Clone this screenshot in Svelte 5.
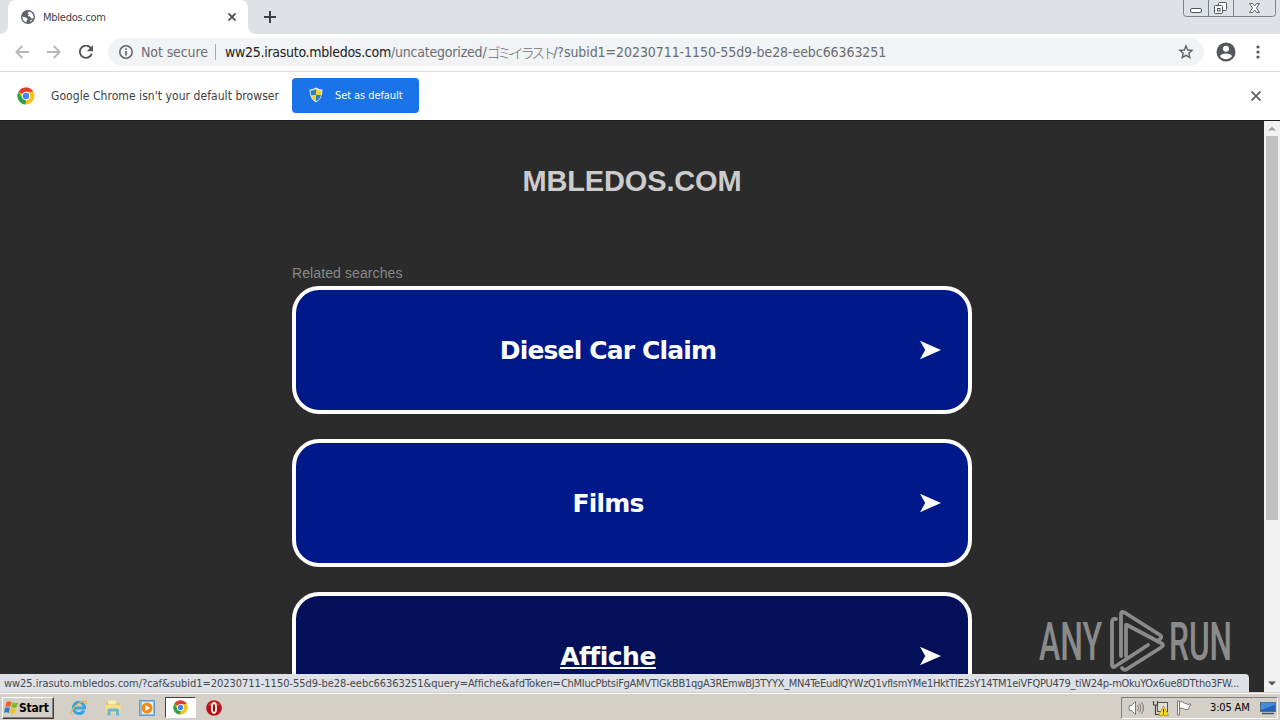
<script lang="ts">
	let tabTitle = 'Mbledos.com';
	let host = 'ww25.irasuto.mbledos.com';
	let pathStart = '/uncategorized/';
	let pathKana = 'ゴミ-イラスト';
	let pathEnd = '/?subid1=20230711-1150-55d9-be28-eebc66363251';
	let hoverUrl =
		'ww25.irasuto.mbledos.com/?caf&subid1=20230711-1150-55d9-be28-eebc66363251&query=Affiche&afdToken=';
	let hoverToken =
		'ChMIucPbtsiFgAMVTlGkBB1qgA3REmwBJ3TYYX_MN4TeEudlQYWzQ1vflsmYMe1HktTIE2sY14TM1eiVFQPU479_tiW24p-mOkuYOx6ue8DTtho3FW...';

	let searches = [
		{ label: 'Diesel Car Claim', hovered: false },
		{ label: 'Films', hovered: false },
		{ label: 'Affiche', hovered: true }
	];
</script>

{#snippet chromeLogo(size: number)}
	<svg width={size} height={size} viewBox="0 0 18 18">
		<circle cx="9" cy="9" r="8.5" fill="#fbc116" />
		<path d="M9 9 1.6 4.7A8.5 8.5 0 0 1 16.4 4.7H9Z" fill="#e33b2e" />
		<path d="M1.6 4.7 5.3 11.1 9 13 8.6 17.5A8.5 8.5 0 0 1 1.6 4.7Z" fill="#2ba24c" />
		<circle cx="9" cy="9" r="4.2" fill="#fff" />
		<circle cx="9" cy="9" r="3.2" fill="#4285f4" />
	</svg>
{/snippet}

<div class="screen">
	<header class="tabstrip">
		<div class="strip-start"></div>
		<div class="tab">
			<svg class="globe" width="14" height="14" viewBox="0 0 14 14">
				<circle cx="7" cy="7" r="7" fill="#5f6368" />
				<path d="M1.5 6.5 5 7.5 7 9.5 5.5 10.5V12.4A5.7 5.7 0 0 1 1.5 6.5ZM8 1.5 6.5 3.2 8 4.5 6.5 6 9 6.5 10.5 8.5 12.5 8.2A5.6 5.6 0 0 0 8 1.5ZM9.5 10 12 9.5 9 12.2Z" fill="#fff" />
			</svg>
			<span class="tab-title">{tabTitle}</span>
			<svg class="tab-close" width="8" height="8" viewBox="0 0 8 8"><path d="M.5.5l7 7M7.5.5l-7 7" stroke="#45494d" stroke-width="1.7" /></svg>
		</div>
		<div class="strip-end">
			<svg class="plus" width="12" height="12" viewBox="0 0 12 12"><path d="M6 0v12M0 6h12" stroke="#3c4043" stroke-width="2" /></svg>
		</div>
		<svg class="window-buttons" width="94" height="17" viewBox="0 0 94 17" fill="none">
			<path d="M.5 0v13.5q0 3 3 3h86q3 0 3-3V0M25.5 0v16M50.5 0v16" stroke="#7c828c" />
			<rect x="7.5" y="8.5" width="11" height="4" rx="1.5" fill="#fff" stroke="#50555f" />
			<rect x="35.5" y="2.5" width="8" height="8" rx="1" fill="#fff" stroke="#50555f" />
			<rect x="31.5" y="5.5" width="8" height="8" rx="1" fill="#fff" stroke="#50555f" />
			<rect x="34.5" y="8.5" width="2.5" height="2.5" stroke="#50555f" />
			<path d="M66.5 3.5h3l2 2.5 2-2.5h3L73.5 8l3 4.500h-3l-2-2.500-2 2.500h-3L69.500 8Z" fill="#fff" stroke="#626771" />
		</svg>
	</header>

	<nav class="toolbar">
		<svg class="arrow" width="14" height="14" viewBox="0 0 14 14"><path d="M14 7H1.5M7.3 1l-6 6 6 6" /></svg>
		<svg class="arrow forward" width="14" height="14" viewBox="0 0 14 14"><path d="M0 7h12.5M6.7 1l6 6-6 6" /></svg>
		<svg class="reload" width="14" height="14" viewBox="0 0 14 14">
			<path d="M12 3.3A6.1 6.1 0 1 0 12.8 8.5" fill="none" stroke="#54585c" stroke-width="1.9" />
			<path d="M14 0v6.2H7.8Z" fill="#54585c" />
		</svg>
		<div class="omnibox">
			<svg class="info" width="14" height="14" viewBox="0 0 14 14">
				<circle cx="7" cy="7" r="6.2" fill="none" stroke="#5f6368" stroke-width="1.5" />
				<path d="M7 6v4.5M7 3.3v1.600" stroke="#5f6368" stroke-width="1.6" />
			</svg>
			<span class="secure">Not secure</span>
			<span class="divider"></span>
			<span class="url"><span class="host">{host}</span><span class="path">{pathStart}</span><span class="kana">{pathKana}</span><span class="query">{pathEnd}</span></span>
			<svg class="star" width="16" height="16" viewBox="0 0 16 16">
				<path d="M8 1.9 9.7 6l4.400.4-3.300 2.900 1 4.300L8 11.300l-3.800 2.300 1-4.300L1.900 6.400 6.300 6Z" fill="none" stroke="#5f6368" stroke-width="1.4" />
			</svg>
		</div>
		<svg class="avatar" width="20" height="20" viewBox="0 0 20 20">
			<circle cx="10" cy="10" r="9.5" fill="#54585c" />
			<circle cx="10" cy="6.8" r="3" fill="#fff" />
			<path d="M4 14.200c1.200-3.600 10.800-3.600 12 0-2.800 4-9.200 4-12 0Z" fill="#fff" />
		</svg>
		<svg class="dots" width="4" height="14" viewBox="0 0 4 14" fill="#54585c">
			<circle cx="2" cy="2" r="1.6" /><circle cx="2" cy="7" r="1.6" /><circle cx="2" cy="12" r="1.6" />
		</svg>
	</nav>

	<div class="infobar">
		<span class="logo">{@render chromeLogo(18)}</span>
		<span class="message">Google Chrome isn't your default browser</span>
		<button class="set-default">
			<svg width="14" height="16" viewBox="0 0 14 16">
				<path d="M7 .5Q10 2.5 13.5 2.5 13.5 12 7 15.5.5 12 .5 2.5 4 2.5 7 .5Z" fill="#e8edf2" />
				<path d="M7 2v6h5q.5-2 .5-4.3Q9.5 3.5 7 2Z" fill="#f6cf32" />
				<path d="M7 2v6H2Q1.5 6 1.5 3.7 4.5 3.5 7 2Z" fill="#287fc2" />
				<path d="M7 8h5q-1 4.5-5 6.5Z" fill="#287fc2" />
				<path d="M7 8v6.5Q3 12.5 2 8Z" fill="#f6cf32" />
			</svg>
			<span>Set as default</span>
		</button>
		<svg class="dismiss" width="10" height="10" viewBox="0 0 10 10"><path d="M.5.5l9 9M9.5.5l-9 9" stroke="#5f6368" stroke-width="1.9" /></svg>
	</div>

	<div class="viewport">
		<main class="page">
			<h1>MBLEDOS.COM</h1>
			<section class="results">
				<p class="related">Related searches</p>
				{#each searches as search}
					<a class="card" class:hovered={search.hovered} href="#top">
						<span class="label">{search.label}</span>
						<svg class="chevron" width="22" height="20" viewBox="0 0 22 20"><path d="M0 .8 21 10 0 19.200 5.200 10Z" fill="#fff" /></svg>
					</a>
				{/each}
			</section>
		</main>
		<div class="scrollbar">
			<svg width="8" height="5" viewBox="0 0 8 5"><path d="M0 4.500 4 .5l4 4Z" fill="#a0a0a0" /></svg>
			<div class="thumb"></div>
			<svg class="down" width="8" height="5" viewBox="0 0 8 5"><path d="M0 .5h8l-4 4Z" fill="#505050" /></svg>
		</div>

		<svg class="watermark" width="200" height="64" viewBox="0 0 200 64">
			<text x="2" y="51" textLength="63" lengthAdjust="spacingAndGlyphs">ANY</text>
			<text x="132" y="51" textLength="63" lengthAdjust="spacingAndGlyphs">RUN</text>
			<g fill="none" stroke="#8b8b8b" stroke-width="3.8" stroke-linejoin="round" stroke-linecap="round">
				<path d="M79 10q-4-1-4 3v43q0 3 3 1.500L111 36" />
				<path d="M84 47V5q0-3.500 3.500-1.500L123 26q3 2-1 5l-2 .5" />
				<path d="M90 16l34 18q4 2 0 4.500L90 60q-3 2-5-1" />
				<path d="M89 16v31" />
			</g>
		</svg>
		<div class="status"><span class="status-start">{hoverUrl}</span><span class="status-token">{hoverToken}</span></div>
	</div>

	<footer class="taskbar">
		<button class="start">
			<svg width="15" height="15" viewBox="0 0 15 15">
				<path d="M2.5 2q2.500-1.500 5 0L6.300 7q-2.500-1.500-5 0Z" fill="#e8602c" />
				<path d="M8.3 2.400q2.500 1.500 5.700 0L12.700 7.200q-2.800 1.500-5.500 0Z" fill="#7db928" />
				<path d="M1 8q2.500-1.500 5 0l-1.200 5q-2.500-1.500-4.800 0Z" fill="#3578c4" />
				<path d="M7 8.200q2.500 1.500 5.400 0L11.100 13q-2.800 1.500-5.400 0Z" fill="#f6be25" />
			</svg>
			<span>Start</span>
		</button>
		<div class="quick">
			<svg width="18" height="18" viewBox="0 0 18 18">
				<path d="M14 11.500A5.600 5.600 0 1 1 14.600 9H5" fill="none" stroke="#36a5df" stroke-width="3" />
				<path d="M1.500 15.500C-1 12 9 2 15.500 2q1.500.5.5 3" fill="none" stroke="#e5bc45" stroke-width="1.3" />
			</svg>
			<svg width="18" height="18" viewBox="0 0 18 18">
				<path d="M2 3h5l1 1h8v10H2Z" fill="#e3c15e" />
				<path d="M4 1.500h8v4H4Z" fill="#f8eeb4" /><path d="M1.500 6h15v8h-15Z" fill="#f6df87" />
				<path d="M3.500 16.500V11.500q0-2 2-2h7.500q2 0 2 2v5h-3v-4H6.500v4Z" fill="#66b3de" />
			</svg>
			<svg width="18" height="18" viewBox="0 0 18 18">
				<rect x="1.5" y="1.5" width="15" height="15" fill="#8cbce2" stroke="#6a9bc4" />
				<rect x="4" y="3" width="11" height="12" fill="#e8f1f8" />
				<circle cx="9" cy="9" r="5.5" fill="#f38b17" /><path d="M7.500 6v6l4.500-3Z" fill="#fff" />
			</svg>
		</div>
		<div class="running">{@render chromeLogo(15)}</div>
		<svg class="opera" width="16" height="16" viewBox="0 0 16 16">
			<circle cx="8" cy="8" r="7.8" fill="#b51218" />
			<path d="M2 6Q8-3 14 6 10 3 2 6Z" fill="#dd5254" />
			<ellipse cx="8" cy="8" rx="2.1" ry="4.9" fill="#961015" stroke="#fff" stroke-width="1.8" />
		</svg>
		<div class="tray">
			<svg width="17" height="16" viewBox="0 0 17 16" fill="none" stroke="#777">
				<path d="M1.500 5.500h2l4-4v13l-4-4h-2q-1-2.500 0-5Z" fill="#fff" />
				<path d="M9.500 5q2 3 0 6M11.500 3.500q3 4.500 0 9M13.500 2q4 6 0 12" />
			</svg>
			<svg width="17" height="16" viewBox="0 0 17 16" fill="none">
				<rect x="5.5" y="2.5" width="10" height="9" fill="#ddd" stroke="#555" />
				<path d="M1.500 1v4h4V1M3.500 5v9.500h8" stroke="#444" stroke-width="1.2" />
				<path d="m11.500 6 5 9.500h-10Z" fill="#ffd91c" stroke="#9c8100" stroke-width=".6" />
				<path d="M11.500 9v3.500M11.500 13.300v1.200" stroke="#222" />
			</svg>
			<svg width="17" height="16" viewBox="0 0 17 16">
				<path d="M1.500 1v14h2v-14ZM3.500 2q3-1 5 1t6.500 1L12 9.500q-3 .5-4.500-.7T3.500 8.500Z" fill="#fff" stroke="#777" />
			</svg>
			<span class="clock">3:05 AM</span>
			<svg class="desktop" width="16" height="14" viewBox="0 0 16 14">
				<rect x=".5" y="1.5" width="15" height="9" fill="#2362b8" stroke="#4e6f9c" />
				<path d="M1 2h14v2L1 9Z" fill="#458bd8" /><path d="M2 12.500h12" stroke="#45546b" stroke-width="1.5" />
			</svg>
		</div>
	</footer>
</div>

<style>
	:global(body) {
		background: #2b2b2b;
		overflow: hidden;
	}

	.screen {
		width: 1280px;
		height: 720px;
		display: flex;
		flex-direction: column;
		overflow: hidden;
		font-family: 'DejaVu Sans Condensed', 'DejaVu Sans', sans-serif;
		font-stretch: condensed;
	}

	svg {
		display: block;
		flex-shrink: 0;
	}

	button {
		border: 0;
		font-family: inherit;
		font-stretch: inherit;
	}

	.screen span,
	.status {
		white-space: nowrap;
	}

	.tabstrip {
		height: 34px;
		display: flex;
		flex-shrink: 0;
		background: #fff;
	}

	.strip-start {
		width: 8px;
		background: #dee1e6;
		border-bottom-right-radius: 8px;
	}

	.tab {
		width: 240px;
		box-sizing: border-box;
		display: flex;
		align-items: center;
		padding: 0 12px 0 13px;
		background: linear-gradient(#dee1e6, #dee1e6) top / 100% 8px no-repeat;
		position: relative;
		z-index: 0;
	}

	.tab::before {
		content: '';
		position: absolute;
		inset: 0;
		z-index: -1;
		background: #fff;
		border-radius: 8px 8px 0 0;
	}

	.tab-title {
		margin-left: 8px;
		font-size: 11px;
		letter-spacing: -0.25px;
		color: #3c4043;
	}

	.tab-close {
		margin-left: auto;
	}

	.strip-end {
		flex: 1;
		display: flex;
		align-items: center;
		padding-left: 16px;
		background: #dee1e6;
		border-bottom-left-radius: 8px;
	}

	.window-buttons {
		margin-right: 3px;
		margin-left: -97px;
	}

	.toolbar {
		height: 35px;
		padding: 0 0 2px 15px;
		border-bottom: 1px solid #dadce0;
		display: flex;
		flex-shrink: 0;
		align-items: center;
		background: #fff;
	}

	.arrow {
		fill: none;
		stroke: #b5b7ba;
		stroke-width: 1.8;
	}

	.forward {
		margin-left: 18px;
	}

	.reload {
		margin-left: 18px;
	}

	.omnibox {
		width: 1096px;
		height: 28px;
		box-sizing: border-box;
		margin-left: 15px;
		padding: 0 10px 0 11px;
		display: flex;
		align-items: center;
		border-radius: 14px;
		background: #f1f3f4;
		color: #6a6e73;
		font-size: 14px;
	}

	.secure {
		margin-left: 8px;
		width: 67px;
		letter-spacing: -0.1px;
	}

	.divider {
		width: 1px;
		height: 16px;
		margin: 0 9px 0 7px;
		background: #a5a8ac;
	}

	.url {
		display: flex;
	}

	.host {
		color: #202124;
		letter-spacing: -0.28px;
	}

	.path {
		letter-spacing: -0.2px;
	}

	.kana {
		font-family: 'Noto Sans CJK JP', sans-serif;
		font-weight: 300;
		font-size: 14px;
		line-height: 16px;
		letter-spacing: -3.1px;
	}

	.query {
		letter-spacing: -0.07px;
	}

	.star {
		margin-left: auto;
	}

	.avatar {
		margin-left: 12px;
	}

	.dots {
		margin-left: 20px;
	}

	.infobar {
		height: 48px;
		border-bottom: 1px solid #1c1c1c;
		display: flex;
		flex-shrink: 0;
		align-items: center;
		padding: 0 19px 0 17px;
		background: #fff;
	}

	.message {
		width: 229px;
		margin-left: 16px;
		font-size: 12px;
		letter-spacing: 0.06px;
		color: #3c4043;
	}

	.set-default {
		width: 127px;
		height: 35px;
		margin: 0 0 2px 12px;
		padding: 0 0 0 17px;
		display: flex;
		align-items: center;
		gap: 12px;
		border-radius: 4px;
		background: #1a73e8;
		color: #fff;
		font-size: 11px;
		letter-spacing: -0.08px;
	}

	.dismiss {
		margin-left: auto;
	}

	.viewport {
		position: relative;
		height: 571px;
		display: flex;
		flex-shrink: 0;
		overflow: hidden;
		background: #2b2b2b;
	}

	.page {
		flex: 1;
	}

	h1 {
		margin: 43px 0 0;
		text-align: center;
		font: bold 29px/35px 'Liberation Sans', sans-serif;
		letter-spacing: -0.15px;
		color: #ccc;
	}

	.results {
		width: 680px;
		margin: 66px auto 0;
		display: flex;
		flex-direction: column;
	}

	.related {
		margin: 0 0 4px;
		font: 14px/17px 'Liberation Sans', sans-serif;
		letter-spacing: 0.1px;
		color: #888;
	}

	.card {
		height: 128px;
		box-sizing: border-box;
		flex-shrink: 0;
		display: flex;
		align-items: center;
		padding-right: 26px;
		margin-bottom: 25px;
		border: 4px solid #fff;
		border-radius: 27px;
		background: #00198a;
		color: #fff;
		text-decoration: none;
	}

	.card.hovered {
		background: #020f59;
	}

	.label {
		flex: 1;
		text-align: center;
		padding-top: 1px;
		font: bold 25px/32px 'DejaVu Sans', sans-serif;
		letter-spacing: -0.85px;
	}

	.hovered .label {
		letter-spacing: -0.5px;
		text-decoration: underline;
		text-decoration-thickness: 2px;
		text-underline-offset: 2px;
	}

	.scrollbar {
		width: 16px;
		box-sizing: border-box;
		display: flex;
		flex-direction: column;
		align-items: center;
		padding: 5px 0 6px;
		background: #f1f1f1;
	}

	.thumb {
		width: 12px;
		height: 384px;
		margin-top: 5px;
		background: #c1c1c1;
	}

	.down {
		margin-top: auto;
	}

	.watermark {
		position: absolute;
		left: 1037px;
		top: 488px;
		font: 500 53px Roboto, sans-serif;
		fill: #8b8b8b;
	}

	.status {
		position: absolute;
		left: 0;
		bottom: 0;
		width: 1249px;
		height: 18px;
		box-sizing: border-box;
		padding-left: 4px;
		border-top-right-radius: 4px;
		background: #dee1e6;
		color: #43474d;
		font-size: 11px;
		line-height: 19px;
	}

	.status-start {
		letter-spacing: -0.04px;
	}

	.status-token {
		letter-spacing: -0.28px;
	}

	.taskbar {
		height: 28px;
		box-sizing: border-box;
		display: flex;
		flex-shrink: 0;
		align-items: center;
		padding: 2px 2px 0;
		border-top: 1px solid #d4d0c8;
		box-shadow: inset 0 1px #fff;
		background: #d4d0c8;
	}

	.start {
		width: 52px;
		height: 22px;
		box-sizing: border-box;
		display: flex;
		align-items: center;
		padding: 0 0 0 1px;
		border: 1px solid;
		border-color: #fff #404040 #404040 #fff;
		box-shadow: inset -1px -1px #808080;
		background: #d4d0c8;
		color: #000;
		font-size: 12px;
		font-weight: bold;
		letter-spacing: -0.2px;
	}

	.quick {
		display: flex;
		gap: 16px;
		margin-left: 16px;
	}

	.running {
		width: 31px;
		height: 21px;
		box-sizing: border-box;
		display: flex;
		align-items: center;
		justify-content: center;
		margin-left: 9px;
		border: 1px solid;
		border-color: #404040 #fff #fff #404040;
		background: #fff;
	}

	.opera {
		margin-left: 10px;
	}

	.tray {
		width: 157px;
		height: 22px;
		box-sizing: border-box;
		display: flex;
		align-items: center;
		gap: 7px;
		margin-left: auto;
		padding-left: 6px;
		border: 1px solid;
		border-color: #808080 #fff #fff #808080;
	}

	.clock {
		width: 41px;
		margin-left: 10px;
		color: #000;
		font-size: 11px;
		letter-spacing: -0.15px;
	}

	.desktop {
		margin-left: 2px;
	}
</style>
